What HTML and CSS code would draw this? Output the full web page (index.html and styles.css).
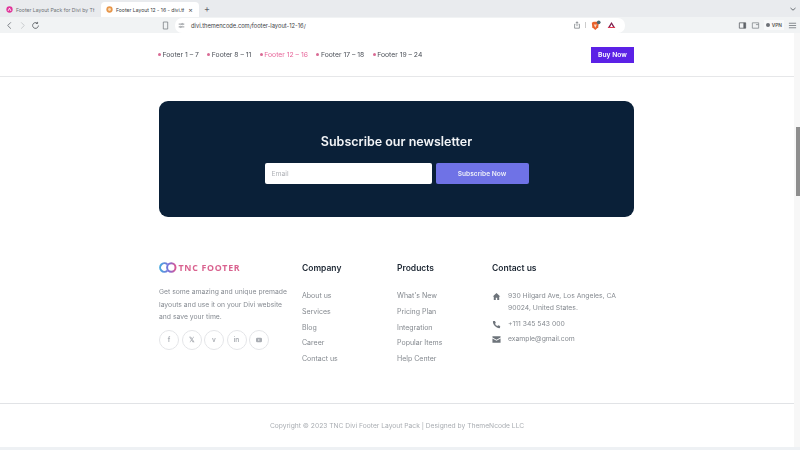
FILE: index.html
```html
<!DOCTYPE html>
<html lang="en">
<head>
<meta charset="utf-8">
<title>Footer Layout 12 - 16</title>
<link rel="stylesheet" href="styles.css">
</head>
<body>
<div class="browser">
  <div class="tabstrip">
    <div class="tab">
      <svg class="fav" viewBox="0 0 10 10"><circle cx="5" cy="5" r="4.5" fill="#e0359a"/><path d="M3 7 5 3l2 4" fill="none" stroke="#fff" stroke-width="1.2"/></svg>
      <span class="tab-text">Footer Layout Pack for Divi by Tł</span>
    </div>
    <div class="tab tab-active">
      <svg class="fav" viewBox="0 0 10 10"><circle cx="5" cy="5" r="4.5" fill="#e8964a"/><circle cx="5" cy="5" r="2" fill="#f7dcb8"/></svg>
      <span class="tab-text">Footer Layout 12 - 16 - divi.tł</span>
      <span class="tab-x">×</span>
    </div>
    <span class="tab-plus">+</span>
    <svg class="tab-chevron" viewBox="0 0 8 8"><path d="M1.500 3 4 5.200 6.500 3" fill="none" stroke="#6b7075" stroke-width="1"/></svg>
  </div>
  <div class="toolbar">
    <div class="nav-buttons">
      <svg class="tool-ic" viewBox="0 0 10 10"><path d="M6.500 1.500 3 5l3.500 3.500" fill="none" stroke="#70757a" stroke-width="1"/></svg>
      <svg class="tool-ic" viewBox="0 0 10 10"><path d="M3.500 1.500 7 5 3.500 8.500" fill="none" stroke="#c4c7ca" stroke-width="1"/></svg>
      <svg class="tool-ic" viewBox="0 0 10 10"><path d="M8.200 5A3.200 3.200 0 1 1 7 2.500M7.300 1v1.800H5.500" fill="none" stroke="#5f6368" stroke-width="1"/></svg>
    </div>
    <svg class="bookmark" viewBox="0 0 8 10"><path d="M1.500 1h5v8h-5z" fill="none" stroke="#7a7f84" stroke-width=".9"/></svg>
    <div class="urlbar">
      <svg class="tune" viewBox="0 0 10 10"><path d="M1 3h4M7 3h2M1 7h2M5 7h4" stroke="#6b7075" stroke-width="1"/><circle cx="6" cy="3" r="1" fill="none" stroke="#6b7075" stroke-width=".8"/><circle cx="4" cy="7" r="1" fill="none" stroke="#6b7075" stroke-width=".8"/></svg>
      <span class="url">divi.themencode.com/footer-layout-12-16/</span>
      <svg class="share" viewBox="0 0 10 10"><path d="M3 4H2v5h6V4H7M5 6.500V1M3.500 2.500 5 1l1.500 1.500" fill="none" stroke="#70757a" stroke-width=".9"/></svg>
      <span class="url-sep"></span>
      <svg class="brave" viewBox="0 0 12 12"><path d="M2 3 4 1.800h3.500L9.500 3 9 8 5.800 11 2.500 8z" fill="#e8622c"/><path d="M4 5h3.500L5.800 8.500z" fill="#f8d6c0"/><circle cx="9.500" cy="2.500" r="2" fill="#4a6a72"/></svg>
      <svg class="bat" viewBox="0 0 12 10"><path d="M6 1 11 9H1z" fill="#7c1f4e"/><path d="M6 4 8 7.500H4z" fill="#fff"/><path d="M1 9h10l-1-1.500H2z" fill="#e5384f"/></svg>
    </div>
    <div class="tool-right">
      <svg class="tool-ic" viewBox="0 0 10 10"><path d="M1.500 2h7v6h-7z" fill="none" stroke="#5f6368" stroke-width=".9"/><path d="M6 2h2.500v6H6z" fill="#5f6368"/></svg>
      <svg class="tool-ic" viewBox="0 0 10 10"><path d="M1.500 2h7v6h-7zM5.500 4h3" fill="none" stroke="#85898e" stroke-width=".9"/></svg>
      <span class="vpn"><i class="vpn-dot"></i>VPN</span>
      <svg class="tool-ic" viewBox="0 0 10 10"><path d="M1 2.500h8M1 5h8M1 7.500h8" stroke="#70757a" stroke-width=".9"/></svg>
    </div>
  </div>
  <div class="viewport">
    <main class="page">
      <nav class="topnav">
        <ul class="menu">
          <li class="menu-item">Footer 1 – 7</li>
          <li class="menu-item">Footer 8 – 11</li>
          <li class="menu-item is-current">Footer 12 – 16</li>
          <li class="menu-item">Footer 17 – 18</li>
          <li class="menu-item">Footer 19 – 24</li>
        </ul>
        <a class="buy">Buy Now</a>
      </nav>
      <section class="newsletter">
        <h2 class="news-title">Subscribe our newsletter</h2>
        <form class="news-form">
          <div class="news-input">Email</div>
          <div class="news-btn">Subscribe Now</div>
        </form>
      </section>
      <footer class="footer">
        <div class="footer-cols">
          <div class="col-about">
            <div class="logo">
              <svg class="logo-mark" viewBox="0 0 18 11"><defs><linearGradient id="lg" gradientUnits="userSpaceOnUse" x1="1" y1="0" x2="17" y2="0"><stop offset="0" stop-color="#4aa8e0"/><stop offset=".55" stop-color="#7a6fd8"/><stop offset="1" stop-color="#e0558f"/></linearGradient></defs><path d="M8.300 2.300A4.300 4.300 0 1 0 8.300 8.700" fill="none" stroke="url(#lg)" stroke-width="2"/><circle cx="12.300" cy="5.500" r="4.200" fill="none" stroke="url(#lg)" stroke-width="2"/></svg>
              <span class="logo-text">TNC FOOTER</span>
            </div>
            <p class="about-text">Get some amazing and unique premade layouts and use it on your Divi website and save your time.</p>
            <div class="socials">
              <span class="social">f</span>
              <span class="social">𝕏</span>
              <span class="social">v</span>
              <span class="social">in</span>
              <span class="social"><svg class="yt" viewBox="0 0 10 8"><rect x="1" y="1" width="8" height="6" rx="1.800" fill="#a9adb3"/><path d="M4.200 2.800v2.400L6 4z" fill="#fff"/></svg></span>
            </div>
          </div>
          <div class="col-links">
            <h3 class="col-title">Company</h3>
            <ul class="links">
              <li>About us</li><li>Services</li><li>Blog</li><li>Career</li><li>Contact us</li>
            </ul>
          </div>
          <div class="col-links">
            <h3 class="col-title">Products</h3>
            <ul class="links">
              <li>What's New</li><li>Pricing Plan</li><li>Integration</li><li>Popular Items</li><li>Help Center</li>
            </ul>
          </div>
          <div class="col-contact">
            <h3 class="col-title">Contact us</h3>
            <ul class="contacts">
              <li class="contact">
                <svg class="contact-ic" viewBox="0 0 10 10"><path d="M5 1 .8 5H2v4h2.200V6.300h1.600V9H8V5h1.200z" fill="#6e747b"/></svg>
                <span>930 Hilgard Ave, Los Angeles, CA 90024, United States.</span>
              </li>
              <li class="contact">
                <svg class="contact-ic" viewBox="0 0 10 10"><path d="M1.500 1.200 3.300 1l1 2.200-1 .9c.6 1.200 1.500 2.100 2.700 2.700l.9-1 2.200 1-.2 1.800c-.1.300-.4.500-.7.500C4.500 9 1 5.500 1 1.800c0-.3.200-.5.500-.6z" fill="#6e747b"/></svg>
                <span>+111 345 543 000</span>
              </li>
              <li class="contact">
                <svg class="contact-ic" viewBox="0 0 10 10"><path d="M.5 1.500h9v1.400L5 5.300.5 2.900zM.5 4 5 6.400 9.500 4v4.500h-9z" fill="#6e747b"/></svg>
                <span>example@gmail.com</span>
              </li>
            </ul>
          </div>
        </div>
        <div class="copyright">Copyright © 2023 TNC Divi Footer Layout Pack | Designed by ThemeNcode LLC</div>
      </footer>
    </main>
    <div class="scrollbar"><div class="thumb"></div></div>
  </div>
  <div class="statusline"></div>
</div>
</body>
</html>
```
FILE: styles.css
```css
* { box-sizing: border-box; }
html, body { margin: 0; padding: 0; }
body { width: 800px; height: 450px; overflow: hidden; font-family: Inter, "Liberation Sans", sans-serif; background: #fff; }
ul { list-style: none; margin: 0; padding: 0; }
h2, h3, p { margin: 0; }
.browser { width: 800px; height: 450px; display: flex; flex-direction: column; will-change: opacity; }

.tabstrip { height: 17px; background: #e9ebee; display: flex; align-items: center; padding-left: 3px; font-size: 5.100px; color: #6d7176; flex: none; }
.tab { width: 98px; height: 15px; display: flex; align-items: center; gap: 3px; padding: 0 3px; margin-top: 2px; white-space: nowrap; }
.tab-active { background: #fff; border-radius: 4px 4px 0 0; color: #3c4043; padding-left: 5px; }
.fav { width: 7px; height: 7px; flex: none; }
.tab-text { flex: 1; }
.tab-x { font-size: 7px; color: #555; padding-right: 3px; }
.tab-plus { font-size: 9px; margin-left: 5px; color: #5f6368; }
.tab-chevron { width: 8px; height: 8px; margin-left: auto; margin-right: 3px; }

.toolbar { height: 16px; background: #f1f3f4; display: flex; align-items: center; flex: none; }
.nav-buttons { display: flex; gap: 4px; padding-left: 5px; width: 160px; }
.tool-ic { width: 9px; height: 9px; flex: none; }
.bookmark { width: 7px; height: 9px; margin-left: 2px; }
.urlbar { width: 450px; height: 15px; margin-left: 6px; background: #fff; border-radius: 7px; display: flex; align-items: center; padding: 0 9px 0 3px; }
.tune { width: 7px; height: 7px; }
.url { font-size: 5.750px; color: #3c4043; margin-left: 6px; flex: 1; }
.share { width: 8px; height: 8px; }
.url-sep { width: 1px; height: 6px; background: #ccc; margin: 0 4px; }
.brave { width: 11px; height: 11px; }
.bat { width: 9px; height: 8px; margin-left: 6px; }
.tool-right { display: flex; align-items: center; gap: 4px; margin-left: auto; padding-right: 3px; }
.vpn { font-size: 4.800px; font-weight: 600; color: #555; display: flex; align-items: center; gap: 2px; padding: 2px 2px; background: #f8f9fa; }
.vpn-dot { width: 4px; height: 4px; border-radius: 50%; background: #6d7176; }

.viewport { flex: 1; display: flex; min-height: 0; }
.page { flex: 1; min-width: 0; }
.scrollbar { width: 6px; background: #f7f7f7; padding-top: 94px; display: flex; justify-content: flex-end; }
.thumb { width: 4px; height: 69px; background: #8e8e8e; }
.statusline { height: 3px; background: #eef1f4; flex: none; }

.topnav { height: 44px; border-bottom: 1px solid #e6e7e9; display: flex; align-items: center; justify-content: space-between; padding: 0 160px 0 158px; }
.menu { display: flex; gap: 8.500px; font-size: 6.800px; color: #4a4f57; }
.menu-item { display: flex; align-items: center; gap: 1.500px; }
.menu-item::before { content: ""; width: 3px; height: 3px; border-radius: 50%; background: #d96a94; }
.is-current { color: #e7659a; }
.buy { width: 43px; height: 16px; background: #5b21e6; color: #fff; font-size: 6.700px; font-weight: 600; display: flex; align-items: center; justify-content: center; }

.newsletter { width: 475px; height: 116px; margin: 24px 0 0 159px; background: #0a2038; border-radius: 9px; display: flex; flex-direction: column; align-items: center; padding-top: 32px; }
.news-title { font-size: 12.500px; font-weight: 600; color: #f2f4f7; line-height: 17px; }
.news-form { display: flex; gap: 4px; margin-top: 13px; }
.news-input { width: 167px; height: 21px; background: #fff; border-radius: 2px; font-size: 6.800px; color: #b0b3b8; display: flex; align-items: center; padding-left: 7px; }
.news-btn { width: 93px; height: 21px; background: #6f72e6; border-radius: 2px; color: #eceef8; font-size: 6.600px; font-weight: 600; display: flex; align-items: center; justify-content: center; }

.footer-cols { display: flex; height: 186px; margin: 0 0 0 159px; padding-top: 45px; }
.col-about { width: 143px; }
.col-links { width: 95px; }
.col-contact { width: 143px; }
.logo { display: flex; align-items: center; gap: 1.500px; height: 11px; }
.logo-mark { width: 18px; height: 11px; flex: none; }
.logo-text { font-size: 8.800px; font-weight: 700; letter-spacing: .7px; color: #d9628f; font-family: "Open Sans", Inter, sans-serif; white-space: nowrap; }
.about-text { font-size: 6.800px; line-height: 12.500px; color: #878c93; margin-top: 13px; width: 131px; }
.socials { display: flex; gap: 2.500px; margin-top: 6.500px; }
.social { width: 20px; height: 20px; border-radius: 50%; border: 1px solid #e4e5e8; display: flex; align-items: center; justify-content: center; color: #a9adb3; font-size: 6.500px; font-weight: 600; }
.yt { width: 8px; height: 6px; }
.col-title { font-size: 8.500px; font-weight: 600; line-height: 12px; color: #1d2733; }
.links { margin-top: 17px; font-size: 7px; color: #84898f; display: flex; flex-direction: column; gap: 6.800px; line-height: 9px; }
.contacts { margin-top: 16px; font-size: 6.800px; line-height: 12px; color: #868b91; display: flex; flex-direction: column; gap: 3.500px; }
.contact { display: flex; gap: 7px; }
.contact-ic { width: 9px; height: 9px; flex: none; margin-top: 2px; }

.copyright { border-top: 1px solid #e1e3e6; height: 44px; display: flex; align-items: center; justify-content: center; font-size: 6.700px; color: #a9adb2; }
```
